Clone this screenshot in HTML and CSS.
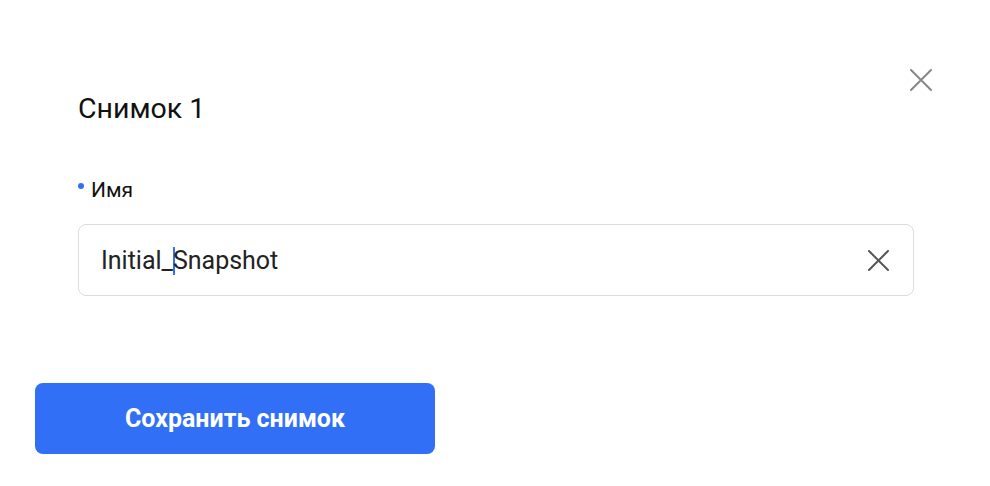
FILE: index.html
```html
<!DOCTYPE html>
<html>
<head>
    <title>Снимок</title>
    <link rel="stylesheet" href="styles.css">
</head>
<body>
    <div class="modal">
        <div class="head">
            <h2 class="title">Снимок 1</h2>
            <button class="close" aria-label="Закрыть">
                <svg width="22" height="22" viewBox="0 0 22 22"><path d="M1 1L21 21M21 1L1 21" stroke="#888" stroke-width="2" stroke-linecap="round"/></svg>
            </button>
        </div>

        <div class="field">
            <label class="label" for="name"><span class="dot"></span>Имя</label>
            <div class="input-box">
                <span class="value">Initial_<span class="caret"></span>Snapshot</span>
                <button class="clear" aria-label="Очистить">
                    <svg width="21" height="21" viewBox="0 0 21 21"><path d="M1 1L20 20M20 1L1 20" stroke="#555" stroke-width="2" stroke-linecap="round"/></svg>
                </button>
            </div>
        </div>

        <div class="footer">
            <button class="save">Сохранить снимок</button>
        </div>
    </div>
</body>
</html>
```

FILE: styles.css
```css
/* page */
body {
    margin: 0;
    background-color: #fff;
    font-family: Roboto, "Noto Sans", sans-serif;
    color: #111;
}

.modal {
    width: 990px;
    height: 486px;
}

/* header */
.head {
    display: flex;
    justify-content: space-between;
    align-items: flex-start;
    padding: 69px 58px 0 78px;
}
.title {
    margin: 24px 0 0 0;
    font-size: 28.5px;
    font-weight: 400;
    line-height: 32px;
}
.close {
    width: 22px;
    height: 22px;
    padding: 0;
    border: none;
    background: none;
    display: flex;
}

/* name field */
.field {
    padding: 0 76px 0 78px;
    margin-top: 52px;
}
.label {
    display: flex;
    align-items: center;
    font-size: 21px;
    line-height: 26px;
    height: 26px;
}
.dot {
    width: 6px;
    height: 6px;
    border-radius: 50%;
    background-color: #316ff6;
    margin: 0 7px 8px 0;
}
.input-box {
    margin-top: 21px;
    height: 70px;
    border: 1px solid #dcdcdc;
    border-radius: 8px;
    display: flex;
    align-items: center;
    justify-content: space-between;
    padding: 0 24px 0 22px;
}
.value {
    font-size: 25px;
    color: #222;
}
.caret {
    display: inline-block;
    width: 2px;
    height: 28px;
    background-color: #316ff6;
    vertical-align: -6px;
    margin: 0 -2px 0 0;
}
.clear {
    width: 21px;
    height: 21px;
    padding: 0;
    border: none;
    background: none;
    display: flex;
}

/* footer */
.footer {
    padding: 87px 0 0 35px;
}
.save {
    width: 400px;
    height: 71px;
    border: none;
    border-radius: 8px;
    background-color: #316ff6;
    color: #fff;
    font-family: Roboto, "Noto Sans", sans-serif;
    font-size: 25px;
    font-weight: 700;
    cursor: pointer;
}
```
